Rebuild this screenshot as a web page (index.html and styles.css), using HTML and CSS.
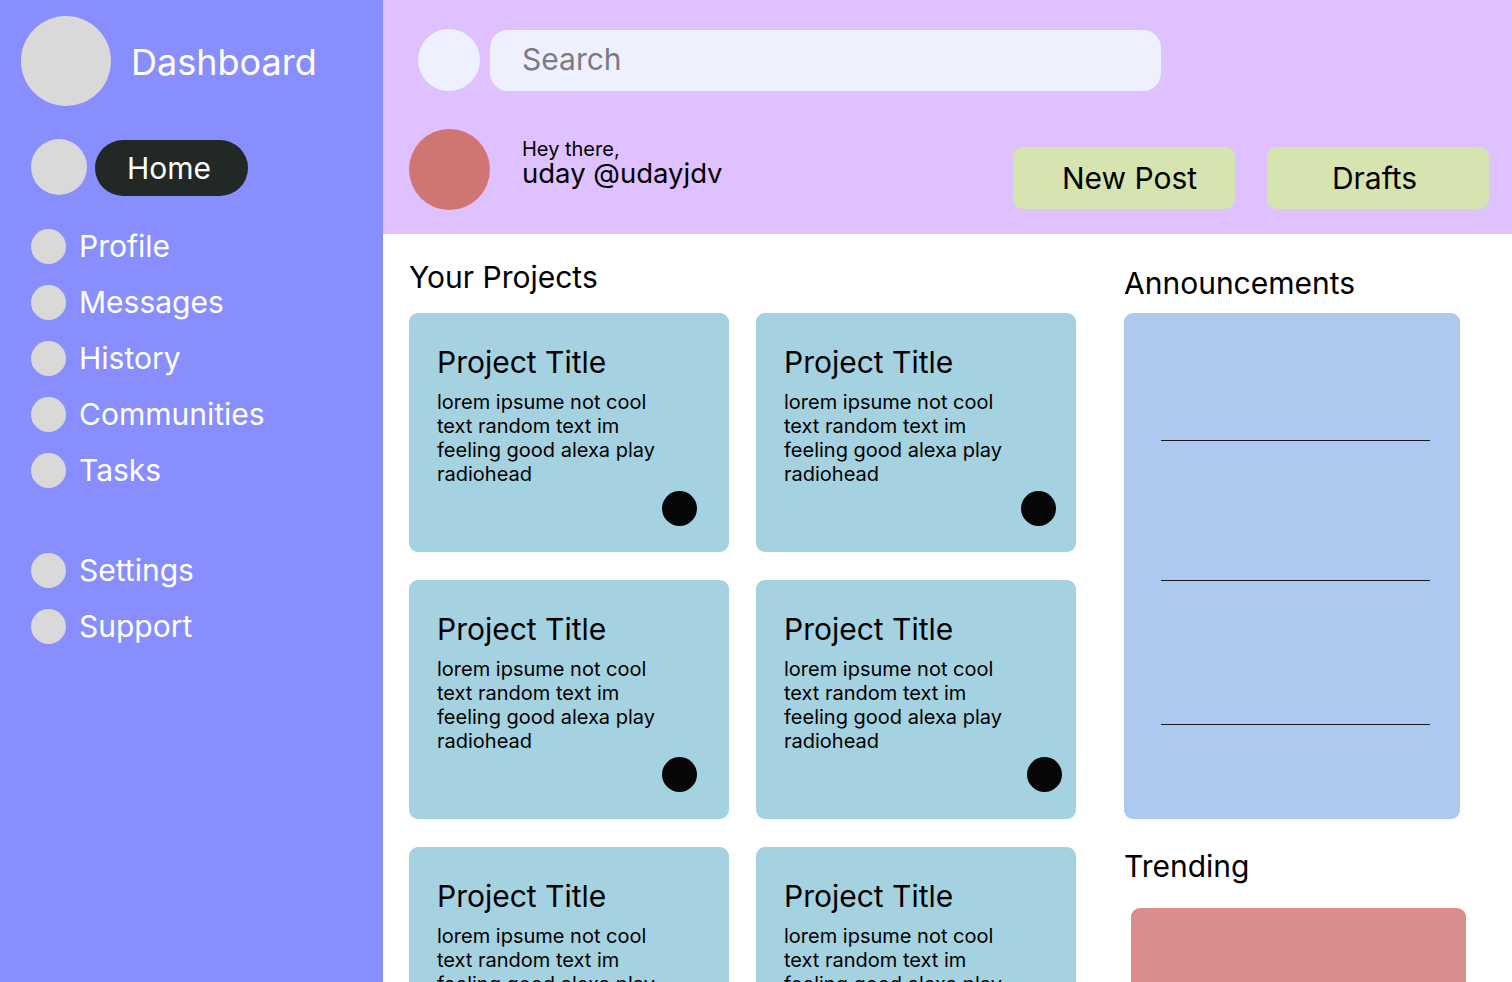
FILE: index.html
```html
<!DOCTYPE html>
<html lang="en">
<head>
<meta charset="utf-8">
<title>Dashboard</title>
<link rel="stylesheet" href="styles.css">
</head>
<body>
<aside class="sidebar">
  <div class="brand">
    <span class="brand-logo"></span>
    <span class="brand-name">Dashboard</span>
  </div>
  <div class="home-row">
    <span class="home-icon"></span>
    <span class="home-pill">Home</span>
  </div>
  <ul class="nav">
    <li class="nav-item"><span class="nav-dot"></span>Profile</li>
    <li class="nav-item"><span class="nav-dot"></span>Messages</li>
    <li class="nav-item"><span class="nav-dot"></span>History</li>
    <li class="nav-item"><span class="nav-dot"></span>Communities</li>
    <li class="nav-item"><span class="nav-dot"></span>Tasks</li>
  </ul>
  <ul class="nav nav-secondary">
    <li class="nav-item"><span class="nav-dot"></span>Settings</li>
    <li class="nav-item"><span class="nav-dot"></span>Support</li>
  </ul>
</aside>
<div class="main">
  <header class="header">
    <div class="search-row">
      <span class="search-icon"></span>
      <div class="search-bar">Search</div>
    </div>
    <div class="profile-row">
      <span class="avatar"></span>
      <div class="greeting">
        <div class="greeting-small">Hey there,</div>
        <div class="greeting-name">uday @udayjdv</div>
      </div>
      <div class="actions">
        <button class="btn btn-new">New Post</button>
        <button class="btn btn-drafts">Drafts</button>
      </div>
    </div>
  </header>
  <div class="content">
    <section class="projects">
      <h2 class="section-title">Your Projects</h2>
      <div class="project-grid">
        <div class="card">
          <div class="card-title">Project Title</div>
          <p class="card-text">lorem ipsume not cool text random text im feeling good alexa play radiohead</p>
          <span class="card-dot dot-a"></span>
        </div>
        <div class="card">
          <div class="card-title">Project Title</div>
          <p class="card-text">lorem ipsume not cool text random text im feeling good alexa play radiohead</p>
          <span class="card-dot dot-b"></span>
        </div>
        <div class="card">
          <div class="card-title">Project Title</div>
          <p class="card-text">lorem ipsume not cool text random text im feeling good alexa play radiohead</p>
          <span class="card-dot dot-c"></span>
        </div>
        <div class="card">
          <div class="card-title">Project Title</div>
          <p class="card-text">lorem ipsume not cool text random text im feeling good alexa play radiohead</p>
          <span class="card-dot dot-d"></span>
        </div>
        <div class="card">
          <div class="card-title">Project Title</div>
          <p class="card-text">lorem ipsume not cool text random text im feeling good alexa play radiohead</p>
          <span class="card-dot dot-a"></span>
        </div>
        <div class="card">
          <div class="card-title">Project Title</div>
          <p class="card-text">lorem ipsume not cool text random text im feeling good alexa play radiohead</p>
          <span class="card-dot dot-b"></span>
        </div>
      </div>
    </section>
    <section class="side">
      <h2 class="section-title side-title">Announcements</h2>
      <div class="announcements">
        <div class="ann-line ann-line-1"></div>
        <div class="ann-line ann-line-2"></div>
        <div class="ann-line ann-line-3"></div>
      </div>
      <h2 class="section-title trending-title">Trending</h2>
      <div class="trending"></div>
    </section>
  </div>
</div>
</body>
</html>
```
FILE: styles.css
```css
* { box-sizing: border-box; }

html, body {
  margin: 0;
  padding: 0;
}

body {
  display: flex;
  width: 1512px;
  height: 982px;
  overflow: hidden;
  font-family: "Inter", "Noto Sans", sans-serif;
  color: #000;
  background: #fff;
}

/* Sidebar */
.sidebar {
  width: 383px;
  flex-shrink: 0;
  background: #898eff;
  color: #fff;
  padding-top: 16px;
}

.brand {
  display: flex;
  align-items: center;
  padding-left: 21px;
  gap: 20px;
}

.brand-logo {
  width: 90px;
  height: 90px;
  border-radius: 50%;
  background: #d9d9d9;
}

.brand-name {
  font-size: 36px;
  line-height: 44px;
  padding-top: 2px;
}

.home-row {
  display: flex;
  align-items: center;
  margin-top: 32px;
  padding-left: 31px;
  gap: 8px;
}

.home-icon {
  width: 56px;
  height: 56px;
  border-radius: 50%;
  background: #d9d9d9;
}

.home-pill {
  display: flex;
  align-items: center;
  width: 153px;
  height: 56px;
  padding-left: 32px;
  padding-bottom: 1px;
  border-radius: 28px;
  background: #222826;
  font-size: 30px;
  margin-top: 2px;
}

.nav {
  list-style: none;
  margin: 22px 0 0;
  padding: 0 0 0 31px;
}

.nav-item {
  display: flex;
  align-items: center;
  gap: 13px;
  height: 56px;
  font-size: 30px;
}

.nav-secondary {
  margin-top: 44px;
}

.nav-dot {
  width: 35px;
  height: 35px;
  border-radius: 50%;
  background: #d9d9d9;
  flex-shrink: 0;
}

/* Main */
.main {
  flex: 1;
  display: flex;
  flex-direction: column;
  min-width: 0;
}

.header {
  height: 234px;
  flex-shrink: 0;
  background: #e0c1ff;
}

.search-row {
  display: flex;
  align-items: center;
  gap: 10px;
  padding: 29px 0 0 35px;
}

.search-icon {
  width: 62px;
  height: 62px;
  border-radius: 50%;
  background: #eef0fd;
}

.search-bar {
  display: flex;
  align-items: center;
  width: 671px;
  height: 61px;
  margin-top: 1px;
  padding-left: 32px;
  padding-bottom: 3px;
  border-radius: 18px;
  background: #eef0fd;
  color: #7b7b86;
  font-size: 30px;
}

.profile-row {
  display: flex;
  align-items: flex-start;
  margin-top: 38px;
  padding: 0 23px 0 26px;
}

.avatar {
  width: 81px;
  height: 81px;
  border-radius: 50%;
  background: #d07672;
  flex-shrink: 0;
}

.greeting {
  margin-left: 32px;
  padding-top: 10px;
}

.greeting-small {
  font-size: 20px;
  line-height: 20px;
}

.greeting-name {
  font-size: 27.5px;
  line-height: 28px;
}

.actions {
  display: flex;
  gap: 32px;
  margin-left: auto;
  margin-top: 18px;
}

.btn {
  width: 222px;
  height: 62px;
  border: none;
  border-radius: 10px;
  background: #d6e4af;
  font-family: inherit;
  font-size: 30px;
  color: #000;
  padding: 0;
}

.btn-new { padding-left: 11px; }
.btn-drafts { padding-right: 7px; }

.content {
  display: flex;
  padding-left: 26px;
}

.section-title {
  margin: 0;
  font-size: 30px;
  line-height: 36px;
  font-weight: 400;
}

.projects {
  width: 667px;
  padding-top: 25px;
}

.project-grid {
  display: grid;
  grid-template-columns: 320px 320px;
  column-gap: 27px;
  row-gap: 28px;
  margin-top: 18px;
}

.card {
  position: relative;
  height: 239px;
  padding: 31px 0 0 28px;
  border-radius: 9px;
  background: #a4d2e1;
}

.card-title {
  font-size: 30px;
  line-height: 36px;
}

.card-text {
  margin: 10px 0 0;
  width: 232px;
  font-size: 20px;
  line-height: 24px;
}

.card-dot {
  position: absolute;
  width: 35px;
  height: 35px;
  border-radius: 50%;
  background: #070707;
  bottom: 26px;
}

.dot-a { right: 32px; }
.dot-b { right: 20px; }
.dot-c { right: 32px; bottom: 27px; }
.dot-d { right: 14px; bottom: 27px; }

.side {
  width: 342px;
  margin-left: 48px;
  padding-top: 31px;
}

.announcements {
  display: flex;
  flex-direction: column;
  width: 336px;
  height: 506px;
  margin-top: 12px;
  padding-left: 37px;
  border-radius: 9px;
  background: #adc9ef;
}

.ann-line {
  width: 269px;
  height: 1px;
  background: #1a1a1a;
}

.ann-line-1 { margin-top: 127px; }
.ann-line-2 { margin-top: 139px; }
.ann-line-3 { margin-top: 143px; }

.trending-title {
  margin-top: 29px;
}

.trending {
  width: 335px;
  height: 200px;
  margin: 24px 0 0 7px;
  border-radius: 9px;
  background: #db8c8c;
}
```
